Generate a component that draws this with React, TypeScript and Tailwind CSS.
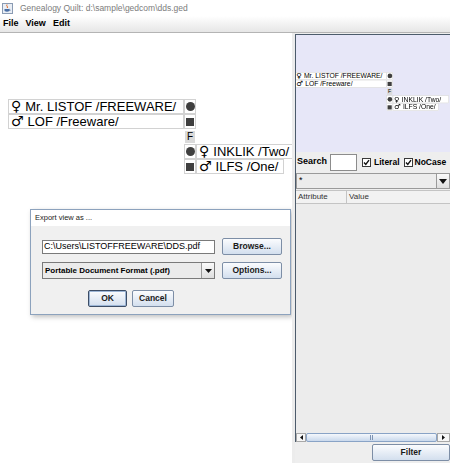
import React from 'react'

function Cell({ kind }: { kind: 'circle' | 'square' }) {
  return (
    <div className="w-[12px] h-[15px] border border-[#d2d2d2] bg-white flex items-center justify-center">
      {kind === 'circle' ? (
        <div className="w-[9px] h-[9px] rounded-full bg-[#3f3f3f]" />
      ) : (
        <div className="w-[8px] h-[8px] bg-[#3f3f3f]" />
      )}
    </div>
  )
}

function NameBox({ sign, name, w }: { sign: string; name: string; w: string }) {
  return (
    <div className={`${w} h-[15px] border border-[#d2d2d2] bg-white flex items-center pl-[2px] text-[13px] leading-[13px] text-black whitespace-nowrap overflow-hidden`}>
      <span className="mr-[4px] font-['DejaVu_Sans',sans-serif] text-[14px] leading-[13px]">{sign}</span>
      {name}
    </div>
  )
}

function Tree() {
  return (
    <div className="relative w-[300px] h-[110px]">
      <div className="absolute left-0 top-0 flex flex-col">
        <div className="flex">
          <NameBox sign="♀" name="Mr. LISTOF /FREEWARE/" w="w-[176px]" />
          <Cell kind="circle" />
        </div>
        <div className="flex">
          <NameBox sign="♂" name="LOF /Freeware/" w="w-[176px]" />
          <Cell kind="square" />
        </div>
      </div>
      <div className="absolute left-[177px] top-[32px] w-[10px] h-[12px] bg-[#dadada] flex items-center justify-center text-[10px] leading-none text-black">
        F
      </div>
      <div className="absolute left-[176px] top-[45px] flex flex-col">
        <div className="flex">
          <Cell kind="circle" />
          <NameBox sign="♀" name="INKLIK /Two/" w="w-[108px]" />
        </div>
        <div className="flex">
          <Cell kind="square" />
          <NameBox sign="♂" name="ILFS /One/" w="w-[88px]" />
        </div>
      </div>
    </div>
  )
}

function Btn({ label, w, focus }: { label: string; w: string; focus?: boolean }) {
  return (
    <div
      className={`${w} h-[17px] shrink-0 rounded-[2px] border ${focus ? 'border-[#3c4d66] ring-1 ring-inset ring-[#9db6d6]' : 'border-[#7d8ea6]'} bg-linear-to-b from-[#fbfcfe] to-[#d3dfee] flex items-center justify-center text-[8.5px] font-bold text-[#1a1a1a]`}
    >
      {label}
    </div>
  )
}

function Check() {
  return (
    <div className="w-[9px] h-[9px] border border-[#3a3a3a] bg-white flex items-center justify-center">
      <svg width="7" height="7" viewBox="0 0 7 7">
        <polyline points="1,3.5 2.8,5.5 6,1.2" fill="none" stroke="#111" strokeWidth="1.4" />
      </svg>
    </div>
  )
}

function JavaIcon() {
  return (
    <svg width="11" height="11" viewBox="0 0 11 11">
      <rect x="0.5" y="0.5" width="10" height="10" fill="#e9eef5" stroke="#8a9bb3" />
      <path d="M5 1.5 C3.8 3 6.5 3.5 5.2 5" fill="none" stroke="#e0641c" strokeWidth="1" />
      <path d="M2.5 6 H7.5 V8 Q5 9.5 2.5 8 Z" fill="#4a6fa5" />
      <path d="M7.5 6.3 Q9 6.8 7.6 7.8" fill="none" stroke="#4a6fa5" strokeWidth="0.8" />
    </svg>
  )
}

export default function App() {
  return (
    <div className="w-[450px] h-[463px] flex flex-col bg-white overflow-hidden font-['Liberation_Sans',Arial,sans-serif] text-black">
      <div className="h-[16px] flex items-center bg-white">
        <div className="ml-[2px]">
          <JavaIcon />
        </div>
        <span className="ml-[7px] text-[8.5px] text-[#7c7c7c]">Genealogy Quilt: d:\sample\gedcom\dds.ged</span>
      </div>
      <div className="h-[17px] flex items-center gap-[7px] pl-[3px] bg-linear-to-b from-white to-[#e6e6e6] border-b border-[#b4b4b4] text-[9px] font-bold">
        <span>File</span>
        <span>View</span>
        <span>Edit</span>
      </div>

      <div className="flex-1 flex min-h-0">
        <div className="w-[292px] shrink-0 relative bg-white overflow-hidden">
          <div className="absolute left-[8px] top-[66px]">
            <Tree />
          </div>

          <div className="absolute left-[30px] top-[176px] w-[261px] h-[106px] flex flex-col border border-[#8ca2bd] shadow-[2px_2px_5px_rgba(0,0,0,0.25)]">
            <div className="h-[16px] bg-white flex items-center pl-[4px] text-[7.5px] text-[#222]">Export view as ...</div>
            <div className="flex-1 bg-[#f0f0f0] pl-[11px] pt-[12px]">
              <div className="flex gap-[7px] items-center">
                <div className="w-[173px] h-[14px] shrink-0 border border-[#7a7a7a] bg-white flex items-center pl-[1px] text-[9px] text-black whitespace-nowrap">
                  C:\Users\LISTOFFREEWARE\DDS.pdf
                </div>
                <Btn label="Browse..." w="w-[60px]" />
              </div>
              <div className="flex gap-[7px] mt-[7px]">
                <div className="w-[173px] h-[17px] shrink-0 border border-[#7a7a7a] bg-[#ebebeb] flex">
                  <div className="flex-1 flex items-center pl-[2px] text-[8px] font-bold whitespace-nowrap">Portable Document Format (.pdf)</div>
                  <div className="w-[13px] border-l border-[#9a9a9a] bg-linear-to-b from-[#fafafa] to-[#dedede] flex items-center justify-center">
                    <svg width="7" height="4" viewBox="0 0 7 4">
                      <polygon points="0,0 7,0 3.5,4" fill="#111" />
                    </svg>
                  </div>
                </div>
                <Btn label="Options..." w="w-[60px]" />
              </div>
              <div className="flex gap-[5px] mt-[11px] pl-[46px]">
                <Btn label="OK" w="w-[39px]" focus />
                <Btn label="Cancel" w="w-[42px]" />
              </div>
            </div>
          </div>
        </div>

        <div className="w-[3px] shrink-0 bg-[#ececec]" />

        <div className="flex-1 min-w-0 flex flex-col bg-[#eeeeee] overflow-hidden">
          <div className="h-[408px] mt-[1px] flex flex-col border-l border-t border-[#4c5b6b]">
            <div className="h-[117px] relative bg-[#e7e7f8] overflow-hidden">
              <div className="absolute left-[-1px] top-[37px] origin-top-left scale-[0.52]">
                <Tree />
              </div>
            </div>
            <div className="h-[20px] flex items-center bg-[#eeeeee] whitespace-nowrap">
              <span className="w-[34px] shrink-0 pl-[1px] text-[9px] font-bold">Search</span>
              <div className="w-[27px] h-[17px] shrink-0 border border-[#8c8c8c] bg-white" />
              <div className="ml-[5px] shrink-0">
                <Check />
              </div>
              <span className="ml-[3px] text-[8.5px] font-bold">Literal</span>
              <div className="ml-[4px] shrink-0">
                <Check />
              </div>
              <span className="ml-[2px] text-[8.5px] font-bold">NoCase</span>
            </div>
            <div className="h-[16px] mt-[1px] border border-[#9a9a9a] bg-[#ececec] flex">
              <div className="flex-1 pl-[2px] text-[9px] leading-[12px]">*</div>
              <div className="w-[13px] border-l border-[#9a9a9a] bg-linear-to-b from-[#fafafa] to-[#dedede] flex items-center justify-center">
                <svg width="8" height="5" viewBox="0 0 8 5">
                  <polygon points="0,0 8,0 4,5" fill="#111" />
                </svg>
              </div>
            </div>
            <div className="h-[14px] mt-[1px] flex border-t border-b border-[#c4c4c4] bg-[#f2f2f2] text-[8px] text-[#333]">
              <div className="w-[51px] pl-[2px] border-r border-[#c4c4c4] flex items-center">Attribute</div>
              <div className="flex-1 pl-[2px] flex items-center">Value</div>
            </div>
            <div className="flex-1 bg-[#ececec]" />
            <div className="h-[9px] flex bg-[#e4e4e4]">
              <div className="w-[10px] border border-[#a8a8a8] bg-[#f6f6f6] flex items-center justify-center">
                <svg width="3" height="5" viewBox="0 0 3 5">
                  <polygon points="3,0 3,5 0,2.5" fill="#111" />
                </svg>
              </div>
              <div className="flex-1 border border-[#89a3c6] rounded-[2px] bg-linear-to-b from-[#f5f8fc] to-[#c9d8ec] flex items-center justify-center">
                <div className="w-[3px] h-[5px] border-l border-r border-[#7d93b3]" />
              </div>
              <div className="w-[13px] border border-[#a8a8a8] bg-[#f6f6f6] flex items-center justify-center">
                <svg width="3" height="5" viewBox="0 0 3 5">
                  <polygon points="0,0 0,5 3,2.5" fill="#111" />
                </svg>
              </div>
            </div>
          </div>
          <div className="flex-1 flex justify-end items-start pt-[2px]">
            <Btn label="Filter" w="w-[78px]" />
          </div>
        </div>
      </div>
    </div>
  )
}
